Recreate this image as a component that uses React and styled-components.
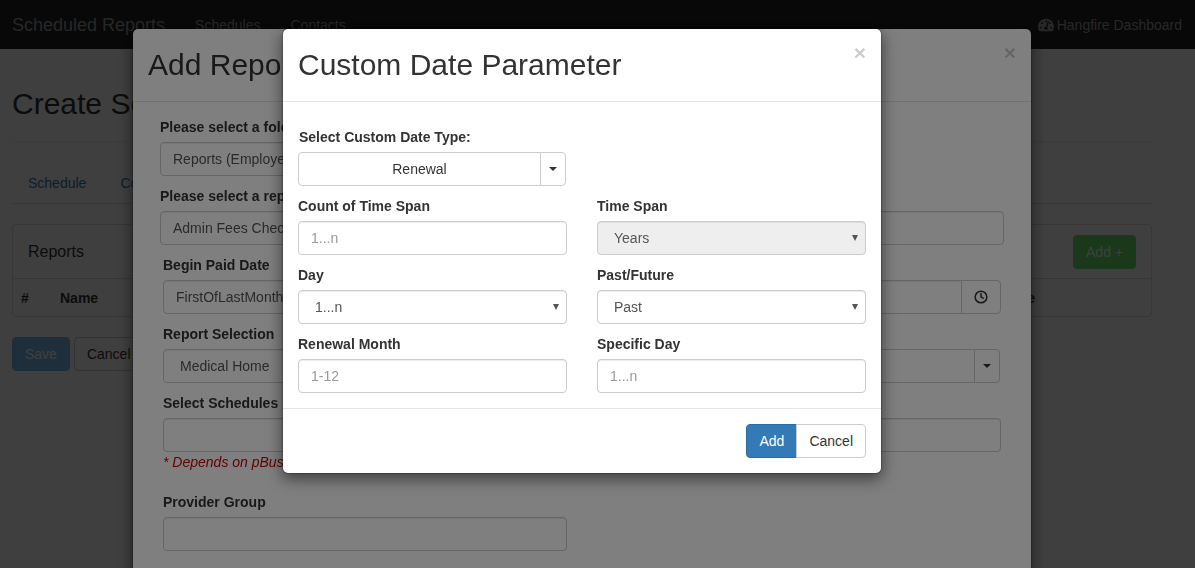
import React from "react"
import styled, { createGlobalStyle } from "styled-components"
import { FaTachometerAlt } from "react-icons/fa"
import { FiClock } from "react-icons/fi"

const GlobalStyle = createGlobalStyle`
  * {
    box-sizing: border-box;
  }

  html,
  body {
    margin: 0;
    height: 100%;
    overflow: hidden;
    background: #fff;
    color: #333;
    font-family: "Liberation Sans", Arial, sans-serif;
    font-size: 14px;
    line-height: 20px;
  }
`

const Navbar = styled.nav`
  height: 49px;
  display: flex;
  align-items: center;
  padding: 0 13px 0 12px;
  background: #222;
  color: #9d9d9d;
`
const Brand = styled.span`
  font-size: 18px;
  margin-right: 15px;
`
const NavLink = styled.span`
  padding: 0 15px;
`
const NavRight = styled.span`
  margin-left: auto;
  display: flex;
  align-items: center;
  gap: 3px;
`
const Container = styled.main`
  width: 1140px;
  margin-left: 12px;
`
const PageTitle = styled.h1`
  margin: 35px 0 0;
  font-size: 30px;
  font-weight: 500;
  line-height: 40px;
`
const Divider = styled.hr`
  margin: 17px 0 0;
  border: 0;
  border-top: 1px solid #eee;
`
const Tabs = styled.div`
  display: flex;
  gap: 2px;
  margin-top: 21px;
  height: 41px;
  border-bottom: 1px solid #ddd;
`
const Tab = styled.a`
  padding: 10px 16px;
  color: #337ab7;
`
const Panel = styled.section`
  margin-top: 20px;
  border: 1px solid #ddd;
  border-radius: 4px;
`
const PanelHeading = styled.header`
  height: 54px;
  display: flex;
  align-items: center;
  justify-content: space-between;
  padding: 0 15px;
  border-bottom: 1px solid #ddd;
  font-size: 16px;
`
const TableRow = styled.div`
  height: 37px;
  display: flex;
  align-items: center;
  padding-left: 8px;
  font-weight: 700;
`
const NumberHead = styled.span`
  width: 39px;
`
const LastHead = styled.span`
  margin-left: auto;
  margin-right: 116px;
`
const PageActions = styled.div`
  display: flex;
  gap: 4px;
  margin-top: 20px;
`
const buttonColors = {
  primary: { bg: "#337ab7", border: "#2e6da4" },
  save: { bg: "#7cb9ee", border: "#7cb9ee" },
  success: { bg: "#68e068", border: "#68e068" },
  plain: { bg: "#fff", border: "#ccc" },
}
const Button = styled.button`
  height: 34px;
  padding: 0 12px;
  font: inherit;
  font-size: 14px;
  border: 1px solid ${(p) => buttonColors[p.$variant || "plain"].border};
  border-radius: 4px;
  background: ${(p) => buttonColors[p.$variant || "plain"].bg};
  color: ${(p) => (p.$variant ? "#fff" : "#333")};
`
const ButtonGroup = styled.div`
  display: flex;

  ${Button}:first-child {
    border-radius: 4px 0 0 4px;
  }

  ${Button}:last-child {
    margin-left: -1px;
    border-radius: 0 4px 4px 0;
  }
`
const Backdrop = styled.div`
  position: fixed;
  inset: 0;
  background: rgba(0, 0, 0, 0.5);
`
const Modal = styled.div`
  position: fixed;
  top: 28px;
  left: ${(p) => p.$left}px;
  width: ${(p) => p.$width}px;
  background: #fff;
  border: 1px solid rgba(0, 0, 0, 0.2);
  border-radius: 6px;
  background-clip: padding-box;
  box-shadow: 0 5px 15px rgba(0, 0, 0, 0.5);
`
const ModalHeader = styled.header`
  height: 73px;
  display: flex;
  justify-content: space-between;
  padding: 19px 15px 0;
  border-bottom: 1px solid #e5e5e5;
`
const ModalTitle = styled.h2`
  margin: 0;
  font-size: 30px;
  font-weight: 500;
  line-height: 33px;
`
const Close = styled.span`
  margin-top: -6px;
  font-size: 21px;
  font-weight: 700;
  line-height: 21px;
  color: #000;
  opacity: 0.2;
`
const ModalBody = styled.div`
  padding: 15px 27px 60px;
`
const Label = styled.label`
  display: block;
  min-height: 20px;
  margin-bottom: 5px;
  padding-left: ${(p) => p.$indent || 0}px;
  font-weight: 700;
`
const Field = styled.div`
  width: ${(p) => p.$width || "auto"};
  margin-bottom: 10px;
`
const ColumnGrid = styled.div`
  display: grid;
  grid-template-columns: ${(p) => p.$columns};
  column-gap: 30px;
  padding: ${(p) => p.$padding || 0};
`
const Input = styled.input`
  display: block;
  width: 100%;
  min-width: 0;
  height: 34px;
  padding: 6px 12px;
  font: inherit;
  color: #555;
  background: #fff;
  border: 1px solid #ccc;
  border-radius: ${(p) => (p.$joined ? "4px 0 0 4px" : "4px")};
  box-shadow: inset 0 1px 1px rgba(0, 0, 0, 0.075);

  &::placeholder {
    color: #999;
    opacity: 1;
  }
`
const SelectWrap = styled.div`
  position: relative;
  flex: 1;

  &::after {
    content: "";
    position: absolute;
    top: 14px;
    right: 8px;
    border-top: 6px solid #555;
    border-left: 3px solid transparent;
    border-right: 3px solid transparent;
    pointer-events: none;
  }
`
const Select = styled.select`
  display: block;
  width: 100%;
  height: 34px;
  padding: 0 12px 0 16px;
  appearance: none;
  font: inherit;
  color: #555;
  background: ${(p) => (p.disabled ? "#eee" : "#fff")};
  border: 1px solid #ccc;
  border-radius: 4px;
  box-shadow: inset 0 1px 1px rgba(0, 0, 0, 0.075);
  opacity: 1;
`
const InputGroup = styled.div`
  display: flex;
  margin-right: ${(p) => p.$inset || 0}px;
`
const Addon = styled.span`
  flex-shrink: 0;
  width: 40px;
  height: 34px;
  margin-left: -1px;
  display: flex;
  align-items: center;
  justify-content: center;
  border: 1px solid #ccc;
  border-radius: 0 4px 4px 0;
  color: #333;
  font-size: 14px;
`
const MainDropdown = styled.button`
  flex: 1;
  height: 34px;
  padding: 0 12px;
  font: inherit;
  color: #333;
  text-align: center;
  background: #fff;
  border: 1px solid #ccc;
  border-radius: 4px 0 0 4px;
`
const CaretButton = styled.button`
  width: 26px;
  height: 34px;
  margin-left: -1px;
  padding: 0;
  display: flex;
  align-items: center;
  justify-content: center;
  background: #fff;
  border: 1px solid #ccc;
  border-radius: 0 4px 4px 0;
`
const Caret = styled.span`
  border-top: 4px solid #333;
  border-left: 4px solid transparent;
  border-right: 4px solid transparent;
`
const HelpText = styled.em`
  display: block;
  margin: -10px 0 20px;
  color: #c00;
`
const InnerBody = styled.div`
  padding: 25px 15px 15px;
`
const InnerGrid = styled.div`
  display: grid;
  grid-template-columns: 269px 269px;
  column-gap: 30px;

  ${Field}:nth-last-child(-n + 2) {
    margin-bottom: 0;
  }
`
const ModalFooter = styled.footer`
  display: flex;
  justify-content: flex-end;
  padding: 15px;
  border-top: 1px solid #e5e5e5;
`

function CaretDropdown(props) {
  return (
    <InputGroup $inset={props.inset}>
      <MainDropdown type="button">{props.label}</MainDropdown>
      <CaretButton type="button">
        <Caret />
      </CaretButton>
    </InputGroup>
  )
}

function SelectField(props) {
  return (
    <SelectWrap>
      <Select disabled={props.disabled} defaultValue={props.value}>
        <option>{props.value}</option>
      </Select>
    </SelectWrap>
  )
}

function BasePage() {
  return (
    <>
      <Navbar>
        <Brand>Scheduled Reports</Brand>
        <NavLink>Schedules</NavLink>
        <NavLink>Contacts</NavLink>
        <NavRight>
          <FaTachometerAlt size={16} />
          Hangfire Dashboard
        </NavRight>
      </Navbar>
      <Container>
        <PageTitle>Create Schedule</PageTitle>
        <Divider />
        <Tabs>
          <Tab>Schedule</Tab>
          <Tab>Contacts</Tab>
        </Tabs>
        <Panel>
          <PanelHeading>
            Reports
            <Button $variant="success">Add +</Button>
          </PanelHeading>
          <TableRow>
            <NumberHead>#</NumberHead>
            Name
            <LastHead>Schedule</LastHead>
          </TableRow>
        </Panel>
        <PageActions>
          <Button $variant="save">Save</Button>
          <Button>Cancel</Button>
        </PageActions>
      </Container>
    </>
  )
}

function AddReportModal() {
  return (
    <Modal $left={132} $width={900}>
      <ModalHeader>
        <ModalTitle>Add Report</ModalTitle>
        <Close>×</Close>
      </ModalHeader>
      <ModalBody>
        <Field $width="404px">
          <Label>Please select a folder</Label>
          <Input readOnly value="Reports (Employee)" />
        </Field>
        <Field>
          <Label>Please select a report</Label>
          <Input readOnly value="Admin Fees Check" />
        </Field>
        <ColumnGrid $columns="404px 404px" $padding="0 0 0 3px">
          <Field>
            <Label>Begin Paid Date</Label>
            <Input readOnly value="FirstOfLastMonth" />
          </Field>
          <Field>
            <Label />
            <InputGroup>
              <Input readOnly $joined value="" />
              <Addon>
                <FiClock size={14} strokeWidth={2.6} />
              </Addon>
            </InputGroup>
          </Field>
          <Field>
            <Label>Report Selection</Label>
            <SelectField value="Medical Home" />
          </Field>
          <Field>
            <Label />
            <CaretDropdown label="" inset={1} />
          </Field>
          <Field>
            <Label>Select Schedules</Label>
            <Input readOnly value="" />
          </Field>
          <Field>
            <Label />
            <Input readOnly value="" />
          </Field>
          <HelpText>* Depends on pBusiness</HelpText>
          <span />
          <Field>
            <Label>Provider Group</Label>
            <Input readOnly value="" />
          </Field>
        </ColumnGrid>
      </ModalBody>
    </Modal>
  )
}

function CustomDateModal() {
  return (
    <Modal $left={282} $width={600}>
      <ModalHeader>
        <ModalTitle>Custom Date Parameter</ModalTitle>
        <Close>×</Close>
      </ModalHeader>
      <InnerBody>
        <Field $width="268px">
          <Label $indent={1}>Select Custom Date Type:</Label>
          <CaretDropdown label="Renewal" />
        </Field>
        <InnerGrid>
          <Field>
            <Label>Count of Time Span</Label>
            <Input placeholder="1...n" />
          </Field>
          <Field>
            <Label>Time Span</Label>
            <SelectField value="Years" disabled />
          </Field>
          <Field>
            <Label>Day</Label>
            <SelectField value="1...n" />
          </Field>
          <Field>
            <Label>Past/Future</Label>
            <SelectField value="Past" />
          </Field>
          <Field>
            <Label>Renewal Month</Label>
            <Input placeholder="1-12" />
          </Field>
          <Field>
            <Label>Specific Day</Label>
            <Input placeholder="1...n" />
          </Field>
        </InnerGrid>
      </InnerBody>
      <ModalFooter>
        <ButtonGroup>
          <Button $variant="primary">Add</Button>
          <Button>Cancel</Button>
        </ButtonGroup>
      </ModalFooter>
    </Modal>
  )
}

export default function App() {
  return (
    <>
      <GlobalStyle />
      <BasePage />
      <Backdrop />
      <AddReportModal />
      <Backdrop />
      <CustomDateModal />
    </>
  )
}
